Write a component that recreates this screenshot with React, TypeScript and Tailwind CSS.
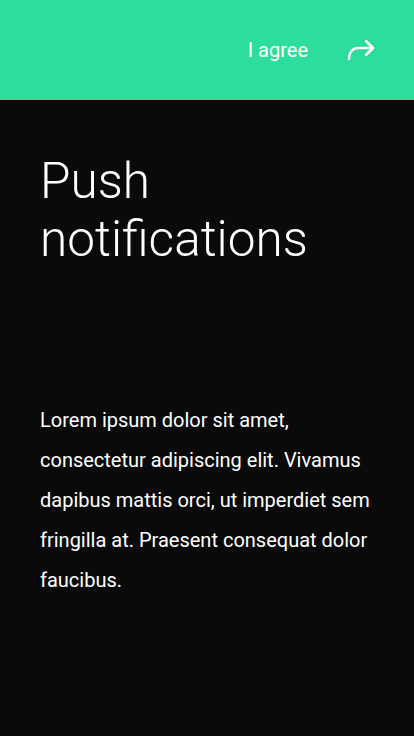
export default function App() {
  return (
    <div
      className="w-[414px] h-[736px] bg-[#0a0a0a] text-white flex flex-col"
      style={{ fontFamily: 'Roboto, "Noto Sans", sans-serif' }}
    >
      <header className="h-[100px] bg-[#2cdd9c] flex items-center justify-end pr-[39px] shrink-0">
        <span className="text-[20px] leading-none font-normal mr-[39px]">I agree</span>
        <svg width="28" height="22" viewBox="0 0 28 22" fill="none" stroke="white" strokeWidth="2.5" strokeLinecap="round" strokeLinejoin="round">
          <path d="M2 20 C2 13 6 9 12 9 H26" />
          <polyline points="19,2 26,9 19,16" />
        </svg>
      </header>

      <div className="px-[40px]">
        <h1 className="mt-[52px] text-[49.5px] leading-[58px] font-light tracking-normal">
          Push
          <br />
          notifications
        </h1>

        <p className="mt-[132px] text-[20px] leading-[40px] font-normal">
          Lorem ipsum dolor sit amet, consectetur adipiscing elit. Vivamus dapibus mattis orci, ut imperdiet sem
          fringilla at. Praesent consequat dolor faucibus.
        </p>
      </div>
    </div>
  );
}
